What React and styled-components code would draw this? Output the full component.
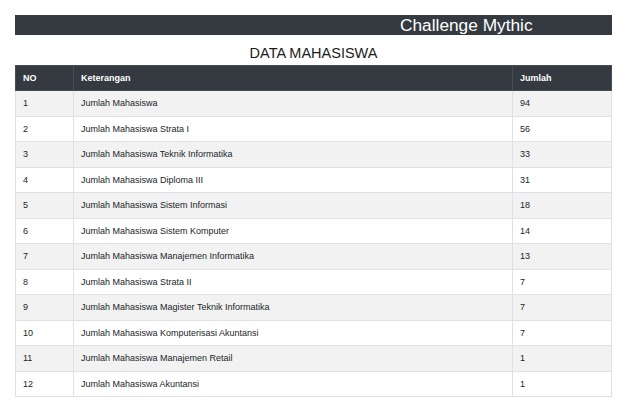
import styled, { createGlobalStyle } from 'styled-components';

const GlobalStyle = createGlobalStyle`
  * { box-sizing: border-box; }
  body {
    margin: 0;
    background: #fff;
    color: #212529;
    font-family: "Liberation Sans", Arial, sans-serif;
  }
`;

const Page = styled.div`
  padding: 15px 15px 0;
`;

const TopBar = styled.div`
  display: flex;
  align-items: center;
  height: 20px;
  padding-left: 385px;
  background: #343a40;
  color: #fff;
  font-size: 17.3px;
  line-height: 20px;
  white-space: nowrap;
  overflow: hidden;
`;

const Title = styled.h3`
  margin: 0;
  padding: 8px 0 1px;
  text-align: center;
  font-size: 14.5px;
  font-weight: 400;
  line-height: 21px;
  color: #1a1d20;
`;

const Table = styled.table`
  width: 100%;
  border-collapse: collapse;
  table-layout: fixed;
  font-size: 9px;
`;

const HeadCell = styled.th`
  width: ${p => p.$w || 'auto'};
  height: 25px;
  padding: 0 7px;
  text-align: left;
  font-weight: 700;
  color: #fff;
  background: #343a40;
  border: 1px solid #454d55;
`;

const Row = styled.tr`
  background: ${p => (p.$odd ? '#f2f2f2' : '#fff')};
`;

const Cell = styled.td`
  padding: 5px 7px;
  line-height: 14.5px;
  color: #212529;
  border: 1px solid #dee2e6;
`;

const rows = [
  ['Jumlah Mahasiswa', 94],
  ['Jumlah Mahasiswa Strata I', 56],
  ['Jumlah Mahasiswa Teknik Informatika', 33],
  ['Jumlah Mahasiswa Diploma III', 31],
  ['Jumlah Mahasiswa Sistem Informasi', 18],
  ['Jumlah Mahasiswa Sistem Komputer', 14],
  ['Jumlah Mahasiswa Manajemen Informatika', 13],
  ['Jumlah Mahasiswa Strata II', 7],
  ['Jumlah Mahasiswa Magister Teknik Informatika', 7],
  ['Jumlah Mahasiswa Komputerisasi Akuntansi', 7],
  ['Jumlah Mahasiswa Manajemen Retail', 1],
  ['Jumlah Mahasiswa Akuntansi', 1],
];

export default function App() {
  return (
    <Page>
      <GlobalStyle />
      <TopBar>Challenge Mythic</TopBar>
      <Title>DATA MAHASISWA</Title>
      <Table>
        <thead>
          <tr>
            <HeadCell $w="58px">NO</HeadCell>
            <HeadCell $w="439px">Keterangan</HeadCell>
            <HeadCell>Jumlah</HeadCell>
          </tr>
        </thead>
        <tbody>
          {rows.map(([label, total], i) => (
            <Row key={label} $odd={i % 2 === 0}>
              <Cell>{i + 1}</Cell>
              <Cell>{label}</Cell>
              <Cell>{total}</Cell>
            </Row>
          ))}
        </tbody>
      </Table>
    </Page>
  );
}
